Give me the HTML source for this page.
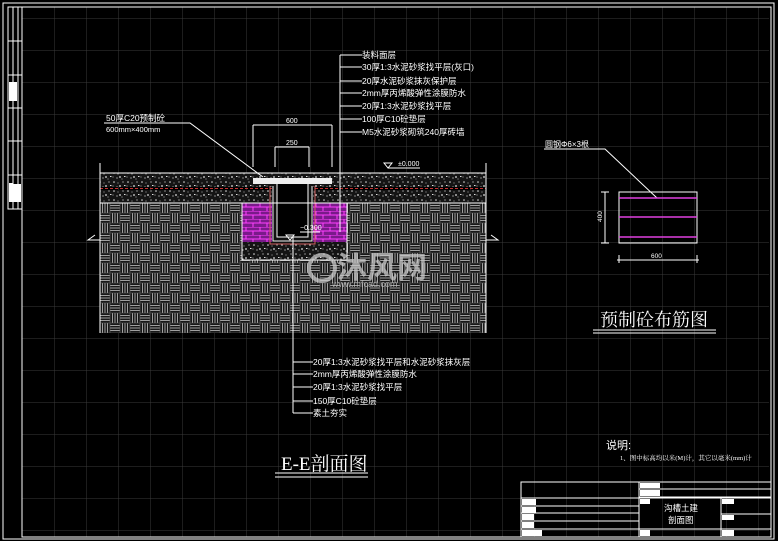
<!DOCTYPE html>
<html><head><meta charset="utf-8"><style>
html,body{margin:0;padding:0;background:#000;}
svg{display:block;}
text{font-family:"Liberation Sans","Noto Sans CJK SC",sans-serif;fill:#fff;}
.s{font-family:"Liberation Serif","Noto Serif CJK SC",serif;}
</style></head><body>
<svg width="778" height="541" viewBox="0 0 778 541" xmlns="http://www.w3.org/2000/svg">
<defs>
<pattern id="grid" x="22" y="18" width="32" height="32" patternUnits="userSpaceOnUse">
<path d="M0 0H32M0 0V32" stroke="#3a3a3a" stroke-width="1" fill="none"/>
</pattern>
<pattern id="weave" x="100" y="203" width="20" height="20" patternUnits="userSpaceOnUse">
<rect width="20" height="20" fill="#181818"/>
<g stroke="#a0a0a0" stroke-width="1">
<path d="M2.5 0V10M5 0V10M7.5 0V10"/>
<path d="M10 2.5H20M10 5H20M10 7.5H20"/>
<path d="M0 12.5H10M0 15H10M0 17.5H10"/>
<path d="M12.5 10V20M15 10V20M17.5 10V20"/>
</g>
<path d="M0 0H20V20H0Z M10 0V20 M0 10H20" stroke="#666" stroke-width="0.6" fill="none"/>
</pattern>
<pattern id="conc" width="14" height="9" patternUnits="userSpaceOnUse">
<rect width="14" height="9" fill="#141414"/>
<g fill="#e0e0e0"><circle cx="2" cy="2" r="0.8"/><circle cx="8" cy="6" r="0.9"/><circle cx="11" cy="2" r="0.6"/><circle cx="5" cy="7" r="0.6"/><rect x="12" y="5" width="1.5" height="1"/><circle cx="6" cy="3" r="0.5"/><circle cx="1" cy="6" r="0.5"/><circle cx="10" cy="8" r="0.5"/></g>
</pattern>
<pattern id="brick" x="242" y="203" width="14" height="8" patternUnits="userSpaceOnUse">
<rect width="14" height="8" fill="#7a1a8a"/>
<path d="M0 0H14M0 4H14M4 0V4M11 4V8" stroke="#ff40ff" stroke-width="1" fill="none"/>
</pattern>
</defs>
<rect width="778" height="541" fill="#000"/>
<rect x="22" y="7" width="747" height="530" fill="url(#grid)"/>
<g stroke="#fff" fill="none" stroke-width="1">
<path d="M3 3H774V539H3Z"/>
<path d="M22 7H771V537H22Z"/>
<path d="M8 7H22V209H8Z M13 7V209 M18 7V209 M8 41H22 M8 75H22 M8 108H22 M8 141H22 M8 175H22"/>
</g>
<rect x="9" y="82" width="4" height="19" fill="#fff"/><rect x="13" y="82" width="4" height="19" fill="#fff"/>
<rect x="9" y="183" width="4" height="19" fill="#fff"/><rect x="13" y="184" width="8" height="18" fill="#fff"/>

<rect x="100" y="203" width="386" height="130" fill="url(#weave)"/>
<rect x="100" y="173" width="386" height="14" fill="url(#conc)"/>
<rect x="100" y="190" width="386" height="13" fill="url(#conc)"/>
<path d="M100 188.5H486" stroke="#c03030" stroke-width="1" stroke-dasharray="3 2"/>
<rect x="242" y="203" width="105" height="57" fill="url(#conc)"/>
<rect x="242" y="203" width="30" height="39" fill="url(#brick)"/>
<rect x="313" y="203" width="34" height="39" fill="url(#brick)"/>
<rect x="272" y="183" width="41" height="60" fill="#111"/>
<path d="M270 186V244H315V186" stroke="#d06060" fill="none" stroke-width="1"/>
<path d="M273 186V241H312V186" stroke="#eee" fill="none" stroke-width="1"/>
<rect x="277" y="183" width="31" height="54" fill="#000" stroke="#fff" stroke-width="1"/>
<rect x="253" y="178" width="79" height="6" fill="#eee"/>
<g stroke="#fff" fill="none" stroke-width="1">
<path d="M100 163V333 M486 163V333 M100 173H486 M100 203H486 M242 203V260H347V203"/>
<path d="M100 240H88L95 235 M486 240H498L491 235"/>
<path d="M340 55V232 M340 55H362 M340 67H362 M340 81H362 M340 93H362 M340 106H362 M340 119H362 M340 132H362"/>
<path d="M104 123H190L263 177"/>
<path d="M253 125H332 M253 125V167 M332 125V167 M275 147H309 M275 147V167 M309 147V167"/>
<path d="M388 168H420 M384 163H392L388 168Z"/>
<path d="M293 237V413 M293 362H313 M293 374H313 M293 387H313 M293 401H313 M293 413H313"/>
<path d="M286 235H294L290 240Z M300 232H320"/>
<path d="M275 473H368 M275 477H368"/>
</g>
<g font-size="8.5">
<text x="362" y="58">装料面层</text>
<text x="362" y="70">30厚1:3水泥砂浆找平层(灰口)</text>
<text x="362" y="84">20厚水泥砂浆抹灰保护层</text>
<text x="362" y="96">2mm厚丙烯酸弹性涂膜防水</text>
<text x="362" y="109">20厚1:3水泥砂浆找平层</text>
<text x="362" y="122">100厚C10砼垫层</text>
<text x="362" y="135">M5水泥砂浆砌筑240厚砖墙</text>
<text x="106" y="121">50厚C20预制砼</text>
<text x="106" y="132" font-size="7.5">600mm×400mm</text>
<text x="313" y="365">20厚1:3水泥砂浆找平层和水泥砂浆抹灰层</text>
<text x="313" y="377">2mm厚丙烯酸弹性涂膜防水</text>
<text x="313" y="390">20厚1:3水泥砂浆找平层</text>
<text x="313" y="404">150厚C10砼垫层</text>
<text x="313" y="416">素土夯实</text>
</g>
<g font-size="7">
<text x="286" y="123">600</text><text x="286" y="145">250</text>
<text x="398" y="166">±0.000</text><text x="300" y="230">−0.300</text>
</g>
<text x="281" y="470" class="s" font-size="19">E-E剖面图</text>
<g opacity="0.75">
<circle cx="322" cy="268" r="13" fill="none" stroke="#c8c8c8" stroke-width="4"/>
<text x="337" y="278" font-size="30" font-weight="bold" style="fill:#c8c8c8">沐风网</text>
<text x="332" y="287" font-size="9" style="fill:#c8c8c8">www.mfcad.com</text>
</g>

<g stroke="#fff" fill="none" stroke-width="1">
<path d="M544 149H605L657 198"/>
<rect x="619" y="192" width="78" height="51"/>
<path d="M605 192V243 M601 192H609 M601 243H609 M617 260H699 M619 255V263 M697 255V263"/>
<path d="M593 330H716 M593 333H716"/>
</g>
<g stroke="#e040e0" stroke-width="1.5"><path d="M619 198H697 M619 217H697 M619 237H697"/></g>
<text x="545" y="147" font-size="8">圆钢Φ6×3根</text>
<text x="651" y="258" font-size="6.5">600</text>
<text x="0" y="0" font-size="6.5" transform="translate(602,222) rotate(-90)">400</text>
<text x="600" y="326" class="s" font-size="18">预制砼布筋图</text>
<text x="606" y="449" font-size="11">说明:</text>
<text x="620" y="460" font-size="6.5" class="s">1、图中标高均以米(M)计，其它以毫米(mm)计</text>

<g stroke="#fff" fill="none" stroke-width="1">
<rect x="521" y="482" width="250" height="55"/>
<path d="M639 482V537 M721 498V537 M521 498H771 M521 506H639 M521 513H639 M521 521H639 M521 529H639 M639 489H771 M639 497H771 M639 529H771 M721 514H771"/>
</g>
<g fill="#fff">
<rect x="522" y="499" width="14" height="6"/><rect x="522" y="507" width="14" height="6"/><rect x="522" y="514" width="12" height="6"/><rect x="522" y="522" width="12" height="6"/><rect x="522" y="530" width="20" height="6"/>
<rect x="640" y="483" width="20" height="5"/><rect x="640" y="490" width="20" height="6"/><rect x="640" y="499" width="10" height="5"/><rect x="640" y="530" width="10" height="6"/>
<rect x="722" y="499" width="12" height="5"/><rect x="722" y="515" width="12" height="5"/><rect x="722" y="530" width="12" height="6"/>
</g>
<text x="664" y="511" font-size="8.5">沟槽土建</text>
<text x="668" y="523" font-size="8.5">剖面图</text>
</svg>
</body></html>
